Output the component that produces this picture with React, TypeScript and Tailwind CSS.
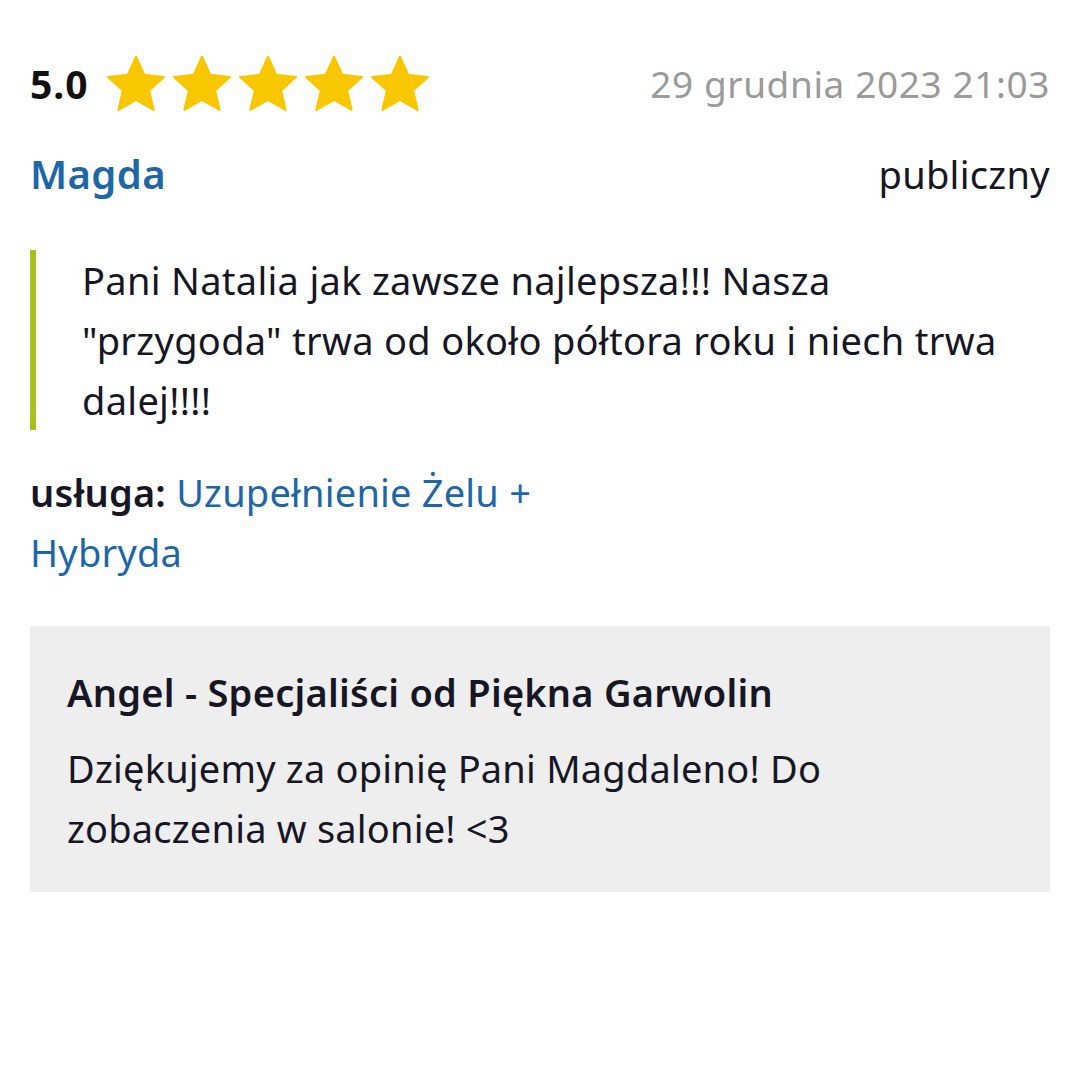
import React from "react";

const Star = () => (
  <svg width="64" height="64" viewBox="0 0 24 24" className="shrink-0">
    <path
      d="M12 1.8l3.1 6.8 7.4.8-5.6 5 1.7 7.3L12 17.9l-6.6 3.8 1.7-7.3-5.6-5 7.4-.8z"
      fill="#f8c700"
      stroke="#f8c700"
      strokeWidth="0.8"
      strokeLinejoin="round"
    />
  </svg>
);

export default function App() {
  return (
    <div
      className="w-[1080px] h-[1080px] bg-white px-[30px] pt-[52px] text-[#161625]"
      style={{ fontFamily: '"Noto Sans", sans-serif' }}
    >
      <div className="flex items-center justify-between h-[64px]">
        <div className="flex items-center">
          <span className="text-[39px] font-bold tracking-[1px] text-[#111] mr-[15px]">5.0</span>
          <div className="flex gap-[2px]">
            <Star />
            <Star />
            <Star />
            <Star />
            <Star />
          </div>
        </div>
        <span className="text-[37px] tracking-[0.6px] text-[#9a9a9a]">29 grudnia 2023 21:03</span>
      </div>
      <div className="flex items-center justify-between mt-[28px] h-[60px]">
        <span className="text-[40px] font-semibold tracking-[0.4px] text-[#1d66a8]">Magda</span>
        <span className="text-[38px] tracking-[0.3px] text-[#161625]">publiczny</span>
      </div>
      <div className="mt-[46px] border-l-[6px] border-[#a7c21c] pl-[46px] text-[38px] tracking-[0.3px] leading-[60px] pr-[40px]">
        Pani Natalia jak zawsze najlepsza!!! Nasza "przygoda" trwa od około półtora roku i niech trwa dalej!!!!
      </div>
      <div className="mt-[32px] w-[560px] text-[38px] tracking-[0.2px] leading-[60px]">
        <span className="font-semibold">usługa:</span>{" "}
        <span className="text-[#1d66a8]">Uzupełnienie Żelu + Hybryda</span>
      </div>
      <div className="mt-[44px] bg-[#eeeeef] px-[37px] pt-[36px] pb-[34px]">
        <div className="text-[38px] font-semibold tracking-[0.25px] leading-[60px]">
          Angel - Specjaliści od Piękna Garwolin
        </div>
        <div className="text-[38px] tracking-[0.2px] leading-[60px] mt-[16px] pr-[160px]">
          Dziękujemy za opinię Pani Magdaleno! Do zobaczenia w salonie! &lt;3
        </div>
      </div>
    </div>
  );
}
